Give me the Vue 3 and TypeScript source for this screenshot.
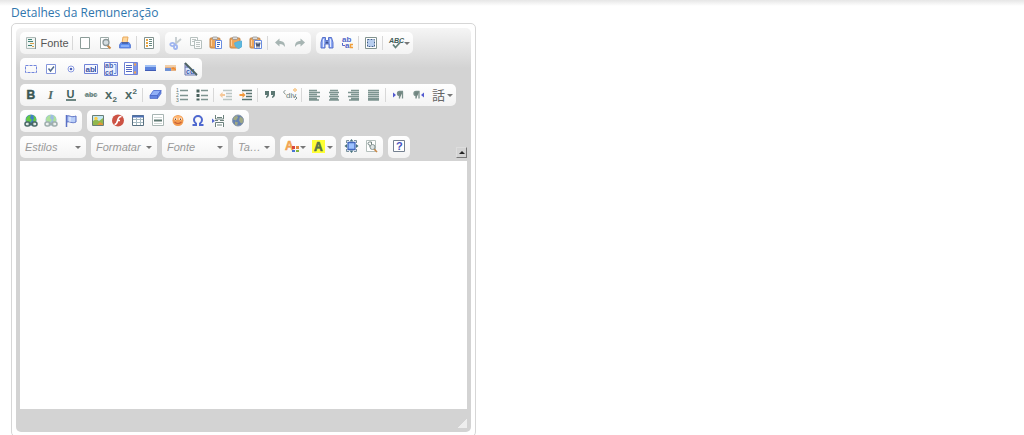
<script setup lang="ts">
import { ref } from 'vue'

interface Tool {
  icon: string
  label: string
  text?: string
  menu?: boolean
  dim?: boolean
}
type Item = Tool | null

const content = ref('')

const t = (icon: string, label: string, extra: Partial<Tool> = {}): Tool => ({ icon, label, ...extra })

const rows: Item[][][] = [
  [
    [t('source', 'Código-Fonte', { text: 'Fonte' }), null, t('page', 'Novo'), t('preview', 'Visualizar'), t('print', 'Imprimir'), null, t('templates', 'Modelos')],
    [t('cut', 'Recortar', { dim: true }), t('copy', 'Copiar', { dim: true }), t('paste', 'Colar'), t('pasteText', 'Colar como texto'), t('pasteWord', 'Colar do Word'), null, t('undo', 'Desfazer', { dim: true }), t('redo', 'Refazer', { dim: true })],
    [t('find', 'Localizar'), t('replace', 'Substituir'), null, t('selectAll', 'Selecionar tudo'), null, t('spell', 'Correção ortográfica', { menu: true })],
  ],
  [
    [t('form', 'Formulário'), t('checkbox', 'Caixa de seleção'), t('radio', 'Botão de opção'), t('field', 'Caixa de texto'), t('area', 'Área de texto'), t('list', 'Lista'), t('button', 'Botão'), t('imageButton', 'Botão de imagem'), t('hidden', 'Campo oculto')],
  ],
  [
    [t('bold', 'Negrito'), t('italic', 'Itálico'), t('underline', 'Sublinhado'), t('strike', 'Tachado'), t('sub', 'Subscrito'), t('sup', 'Sobrescrito'), null, t('eraser', 'Remover formatação')],
    [t('numbered', 'Lista numerada'), t('bulleted', 'Lista sem números'), null, t('outdent', 'Diminuir recuo', { dim: true }), t('indent', 'Aumentar recuo'), null, t('quote', 'Citação'), t('div', 'Contêiner DIV'), null, t('left', 'Alinhar à esquerda'), t('center', 'Centralizar'), t('right', 'Alinhar à direita'), t('justify', 'Justificado'), null, t('ltr', 'Esquerda para direita'), t('rtl', 'Direita para esquerda'), t('language', 'Idioma', { menu: true })],
  ],
  [
    [t('link', 'Link'), t('unlink', 'Remover link', { dim: true }), t('anchor', 'Âncora')],
    [t('image', 'Imagem'), t('flash', 'Flash'), t('table', 'Tabela'), t('rule', 'Linha horizontal'), t('smiley', 'Emoticon'), t('omega', 'Caractere especial'), t('pageBreak', 'Quebra de página'), t('iframe', 'IFrame')],
  ],
]

const combos = [
  { label: 'Estilos', name: 'Estilos', small: false },
  { label: 'Formatar', name: 'Formatar', small: false },
  { label: 'Fonte', name: 'Fonte', small: false },
  { label: 'Ta…', name: 'Tamanho', small: true },
]

const lastGroups: Tool[][] = [
  [t('textColor', 'Cor do texto', { menu: true }), t('bgColor', 'Cor do plano de fundo', { menu: true })],
  [t('maximize', 'Maximizar'), t('blocks', 'Mostrar blocos')],
  [t('about', 'Sobre')],
]

const sans = 'font-family="Liberation Sans, Arial, sans-serif"'
const board = '<rect x="2" y="3" width="10" height="10" rx="1" fill="#eda55a" stroke="#c08448"/><rect x="4.500" y="2" width="5" height="2.500" rx="1" fill="#ddd" stroke="#888" stroke-width=".7"/>'
const clasp = '<path d="M3.500 5v6" stroke="#ffd09a"/>'
const globe = '<circle cx="8" cy="7" r="5.500" fill="#4180c8"/><path d="M3 6c1-3 3-4 5-4L7 5l2 2-3 4C4 10 3 8 3 6zm7-4c2 1 4 3 3 6l-2 2-1-3 1-2z" fill="#65c944"/>'
const chain = '<rect x="2" y="9" width="5" height="4" rx="2" fill="#dfe8e6" stroke="#496765" stroke-width="1.500"/><rect x="9" y="9" width="5" height="4" rx="2" fill="#dfe8e6" stroke="#496765" stroke-width="1.500"/><path d="M5.500 11h5" stroke="#496765" stroke-width="1.500"/>'
const lines = (d: string) => `<path d="${d}" fill="none" stroke="#7d9490" stroke-width="1.300"/>`

const icons: Record<string, string> = {
  source: '<path d="M3.500 2.500h9v11h-9z" fill="#eef4f2" stroke="#b0bbb8"/><path d="M5 4.500h4M5 6.500h5M5 10.500h4" stroke="#3f7f74"/><path d="M7 8.500h4M9 11.500h2" stroke="#dba348"/><path d="M12.500 3v11" stroke="#7f908c"/>',
  page: '<path d="M3.500 2.500h9v11h-9z" fill="#fff" stroke="#8c9c98"/>',
  preview: '<path d="M3.500 2.500h8v11h-8z" fill="#fff" stroke="#9dabA8"/><path d="m10 10 3.500 3.500" stroke="#c98745" stroke-width="2"/><circle cx="9" cy="7.500" r="3" fill="#d5dde0" stroke="#8b9899" stroke-width="1.300"/>',
  print: '<path d="m5 8 1-6h5l-1 6z" fill="#ffd79c" stroke="#e9aa5e"/><path d="m4 7.500-1.500 2.500v3h11v-3L12 7.500z" fill="#5b8df0" stroke="#5576d0" stroke-width=".8"/><path d="M5 8h6" stroke="#38477b"/><path d="M4 11h8" stroke="#b4cfff"/>',
  templates: '<path d="M3.500 2.500h9v11h-9z" fill="#fff" stroke="#82938f"/><path d="M6 4v8" stroke="#e9a53f" stroke-width="2" stroke-dasharray="2 1"/><path d="M8 4.500h3M8 6.500h3M8 8.500h3M8 10.500h3" stroke="#66877e"/>',
  cut: '<path d="m8 2 0 7m5-5L6 10" stroke="#8e9da4" stroke-width="1.800"/><ellipse cx="4.500" cy="9.500" rx="2.200" ry="1.600" fill="none" stroke="#4a74e8" stroke-width="1.800"/><ellipse cx="7.500" cy="12" rx="1.600" ry="2" fill="none" stroke="#4a74e8" stroke-width="1.800"/>',
  copy: '<path d="M2.500 2.500h7v8h-7z" fill="#fff" stroke="#748884"/><path d="M6.500 5.500h7v8h-7z" fill="#fff" stroke="#748884"/><path d="M4 4.500h4M4 6.500h2M8 7.500h4M8 9.500h4M8 11.500h4" stroke="#82938f"/>',
  paste: board + clasp + '<path d="M7.500 5.500h6v8h-6z" fill="#fff" stroke="#6a8ce0"/><path d="M9 7.500h3M9 9.500h3M9 11.500h2" stroke="#4169c3"/>',
  pasteText: board + clasp + '<path d="m6.500 8 4-1.500 3-.5 0 6-3 1.500-3-2z" fill="#5bb9dd" stroke="#5cb0d8"/>',
  pasteWord: board + clasp + '<path d="M6.500 5.500h7v8h-7z" fill="#fff" stroke="#6a8ce0"/><path d="m8 7.500 1 4 1-3 1 3 1-4" fill="none" stroke="#4d5874" stroke-width="1.200"/>',
  undo: '<path d="M3 7.500 7.500 3.500v2.500c4 0 5.500 2 5.500 6-1.500-2-2.500-3-5.500-3v2.500z" fill="#53706b"/>',
  redo: '<path d="M13 7.500 8.500 3.500v2.500C4.500 6 3 8 3 12c1.500-2 2.500-3 5.500-3v2.500z" fill="#53706b"/>',
  find: '<path d="M3.500 2.500h3v3h3v-3h3l1.500 5v5.500h-4V9H6v4H2V7.500z" fill="#8fabf5" stroke="#4c67c5" stroke-width=".9"/><path d="M4.500 4v8M11.500 4v8" stroke="#e4ebff"/><path d="M6.500 7.500h3" stroke="#3c508f" stroke-width="2"/>',
  replace: `<text x="3" y="7" ${sans} font-size="8" font-weight="bold" fill="#5267c9">ab</text><text x="6" y="13" ${sans} font-size="8" font-weight="bold" fill="#5267c9">a</text><path d="M14 9.500h-2.500v3H14" fill="none" stroke="#f0a03c" stroke-width="1.500"/><path d="M3.500 8v2.500H6" fill="none" stroke="#5267c9"/>`,
  selectAll: '<path d="M2.500 2.500h11v11h-11z" fill="#fff" stroke="#82938f"/><path d="M5 5h6v6H5z" fill="#b8ceef"/><path d="M4.500 4.500h7v7h-7z" fill="none" stroke="#3f608f" stroke-dasharray="2 1"/>',
  spell: `<text x="1" y="8" ${sans} font-size="7" font-weight="bold" font-style="italic" fill="#3f5b56">ABC</text><path d="m5 9.500 2.500 3L12 7.500" fill="none" stroke="#64817b" stroke-width="1.800"/>`,
  form: '<path d="M2.500 4.500h11v7h-11z" fill="none" stroke="#7185dc" stroke-dasharray="3 1"/>',
  checkbox: '<path d="M3.500 3.500h9v9h-9z" fill="#fff" stroke="#8596dc"/><path d="m5.500 7.500 2 2.500L11 5.500" fill="none" stroke="#536d8e" stroke-width="1.500"/>',
  radio: '<circle cx="8" cy="8" r="3" fill="#fff" stroke="#8b9be2"/><circle cx="8" cy="8" r="1.300" fill="#4d62b5"/>',
  field: `<path d="M1.500 3.500h13v9h-13z" fill="#f4f7ff" stroke="#7184d8"/><text x="2.500" y="11" ${sans} font-size="8" font-weight="bold" fill="#3f539f">ab</text><path d="M12.500 5v6" stroke="#4b5fac"/>`,
  area: `<path d="M1.500 1.500h13v13h-13z" fill="#edf2ff" stroke="#7184d8"/><text x="2" y="7" ${sans} font-size="7" font-weight="bold" fill="#4b5fac">ab</text><text x="2" y="14" ${sans} font-size="7" font-weight="bold" fill="#4b5fac">cd</text><path d="M11 3.500h2v9h-2" fill="none" stroke="#678cda"/>`,
  list: '<path d="M1.500 1.500h13v12h-13z" fill="#fff" stroke="#7184d8"/><path d="M3 4.500h6M3 6.500h6M3 8.500h6M3 10.500h6" stroke="#5268c0"/><path d="M12 2v11" stroke="#7f95e5" stroke-width="4"/><path d="M11 3.500h2M11 11.500h2" stroke="#f5a44c" stroke-width="2"/>',
  button: '<path d="M2 4h11v6H2z" fill="#5a82dc"/><path d="M2 4h11v2H2z" fill="#a1c1f4"/><path d="M2 9.500h11" stroke="#405bb5"/>',
  imageButton: '<path d="M2 4h11v6H2z" fill="#e5b184"/><path d="M2 4h11v2H2z" fill="#f1cfaa"/><path d="M2 7h6v3H2z" fill="#6f92d5"/><path d="m8 8 2-2 3 2v1z" fill="#f18b2d"/>',
  hidden: `<path d="M2 2v12h12z" fill="#dce7ff" stroke="#6a79ad"/><text x="3" y="13" ${sans} font-size="7" font-weight="bold" fill="#405bab">cd</text><text x="2" y="7" ${sans} font-size="6" fill="#405bab">a</text><path d="m2 2 12 12" stroke="#4d6261" stroke-width="1.800"/>`,
  bold: `<text x="3.500" y="12" ${sans} font-size="12" font-weight="bold" fill="#3b5854" stroke="#3b5854" stroke-width=".5">B</text>`,
  italic: '<text x="5" y="12" font-family="Liberation Serif, serif" font-size="13" font-style="italic" font-weight="bold" fill="#526d69">I</text>',
  underline: `<text x="3.500" y="11" ${sans} font-size="11" font-weight="bold" fill="#3f605b">U</text><path d="M3 13h10" stroke="#3f605b" stroke-width="1.500"/>`,
  strike: `<text x="2" y="10" ${sans} font-size="7" font-weight="bold" fill="#627d79">abc</text><path d="M1.500 8h13" stroke="#627d79" stroke-width=".8"/>`,
  sub: `<text x="2" y="12" ${sans} font-size="13" font-weight="bold" fill="#4d6965">x<tspan x="9.500" y="15" font-size="8">2</tspan></text>`,
  sup: `<text x="2" y="12" ${sans} font-size="13" font-weight="bold" fill="#4d6965">x<tspan x="9.500" y="7" font-size="8">2</tspan></text>`,
  eraser: '<path d="m3 8.500 3.500-5H14l-3.500 5z" fill="#91b0f7" stroke="#5d79d6"/><path d="M3 8.500h7.500v3H3zM10.500 8.500 14 3.500v3l-3.500 5z" fill="#6284e2" stroke="#4b67c5" stroke-width=".7"/>',
  numbered: `<text x="2" y="5" ${sans} font-size="5" fill="#5d7873">1</text><text x="2" y="10" ${sans} font-size="5" fill="#5d7873">2</text><text x="2" y="15" ${sans} font-size="5" fill="#5d7873">3</text>` + lines('M6 3.500h8M6 8.500h8M6 12.500h8'),
  bulleted: '<path d="M2.500 2.500h3v3h-3zM2.500 7h3v3h-3zM2.500 11.500h3v2h-3z" fill="#48615c"/>' + lines('M7 3.500h7M7 8.500h7M7 12.500h7'),
  outdent: lines('M5 3.500h9M8 6.500h6M8 9.500h6M5 12.500h9') + '<path d="m1.500 8 3-3v2H7v2H4.500v2z" fill="#f3983b"/>',
  indent: '<path d="M4 3.500h10M8 6.500h6M8 9.500h6M4 12.500h10" stroke="#5b7571" stroke-width="1.300"/><path d="m7.500 8-3-3v2H1.500v2h3v2z" fill="#f3983b"/>',
  quote: '<path d="M3 4h4v3.500c0 2-1 3-3 3.500V9.500c1-.5 1-1 1-1.500H3zM9 4h4v3.500c0 2-1 3-3 3.500V9.500c1-.5 1-1 1-1.500H9z" fill="#5c7873"/>',
  div: `<text x="4" y="11" ${sans} font-size="8" fill="#637d78">div</text><path d="m3.500 3-2 2 2 2.500M13 9l2 2-2 2" fill="none" stroke="#85938f"/><path d="m11.500 3 1.500-1.500L14.500 3 13 4.500z" fill="none" stroke="#f3a43c"/>`,
  left: lines('M3 3.500h8M3 5.500h11M3 7.500h8M3 9.500h11M3 11.500h8M3 13h10'),
  center: lines('M4 3.500h8M3 5.500h10M4 7.500h8M3 9.500h10M4 11.500h8M3 13h10'),
  right: lines('M5 3.500h8M2 5.500h11M5 7.500h8M2 9.500h11M5 11.500h8M3 13h10'),
  justify: lines('M2 3.500h11M2 5.500h11M2 7.500h11M2 9.500h11M2 11.500h11M2 13h11'),
  ltr: '<path d="m3 5.500 3 2.500-3 2.500z" fill="#535bd0"/><path d="M13 4.500H9.500a2 2 0 0 0 0 4v3M12.500 4.500v7" fill="#70847f" stroke="#7a908b" stroke-width="1.300"/>',
  rtl: '<path d="m14 5.500-3 2.500 3 2.500z" fill="#535bd0"/><path d="M9.500 4.500H6a2 2 0 0 0 0 4v3M9 4.500v7" fill="#70847f" stroke="#7a908b" stroke-width="1.300"/>',
  language: '<text x="1" y="13" font-family="Noto Sans CJK JP, sans-serif" font-size="13" fill="#666">話</text>',
  link: globe + chain,
  unlink: globe + chain,
  anchor: '<path d="M3.500 2v12" stroke="#5b71c5" stroke-width="1.500"/><path d="M4 3c3-1 4 2 9 0v6c-4 2-6-1-9 0z" fill="#b9cef8" stroke="#5b71c5"/><path d="M7 4v5" stroke="#eef4ff"/>',
  image: '<path d="M2.500 2.500h11v10h-11z" fill="#c2e8f4" stroke="#687e76"/><path d="m3 8 3-2 3 2 4-3v7H3z" fill="#91b84d"/><circle cx="6" cy="5.500" r="1.700" fill="#ffcd45"/><path d="m7 12 3-3 3 2v1z" fill="#e19639"/>',
  flash: '<circle cx="8" cy="7.500" r="6" fill="#cc5244"/><path d="M11.500 3.500C8 3.500 8 6.500 7.500 8 7 10 6.500 11.500 4.500 11.500M7 7.500h3" fill="none" stroke="#fff" stroke-width="1.600"/>',
  table: '<path d="M2.500 2.500h11v10h-11z" fill="#fff" stroke="#587081"/><path d="M2 3.500h12" stroke="#4d70b2" stroke-width="2"/><path d="M3 6.500h10M3 9.500h10M6.500 5v7M10.500 5v7" stroke="#a5b9c1"/>',
  rule: '<path d="M2.500 1.500h11v11h-11z" fill="#fff" stroke="#a8b5b3"/><path d="M4 4.500h8M4 10.500h8" stroke="#d1d9d7"/><path d="M4 7.500h8" stroke="#5e7972" stroke-width="2"/>',
  smiley: '<circle cx="8" cy="7.500" r="5.500" fill="#f29b4f"/><ellipse cx="8" cy="5" rx="4" ry="2" fill="#ffb875"/><circle cx="5.500" cy="6" r="1.200" fill="#fff"/><circle cx="10.500" cy="6" r="1.200" fill="#fff"/><path d="M5.500 5.500v1.500M10.500 5.500v1.500" stroke="#734b33"/><path d="M4.500 9q3.500 3 7 0" fill="none" stroke="#c9623a" stroke-width="1.200"/>',
  omega: '<path d="M2.500 12h3.500v-1.500C4.500 9.500 4 8.500 4 7a4 4 0 0 1 8 0c0 1.500-.5 2.500-2 3.500V12h3.500" fill="none" stroke="#4e68cf" stroke-width="2"/>',
  pageBreak: '<path d="M5.500 2v4h8V2M5.500 14V9.500h8V14" fill="#fff" stroke="#6b817c"/><path d="M7 4.500h5M5 7.500h3M10 7.500h4M7 12h5" stroke="#6b817c"/><path d="m2 5.500 3 2.500-3 2z" fill="#586bd0"/>',
  iframe: '<circle cx="8" cy="7.500" r="5.500" fill="#6481b3"/><path d="M4 4 7 2.500l1 2-2 3-3-1zM10 3.500l3 2v4l-2 1-2-3zM5 8.500l3 1-1 3-2-1z" fill="#a0a983"/><circle cx="8" cy="7.500" r="5.500" fill="none" stroke="#8c9aaa"/>',
  textColor: `<text x="1" y="11" ${sans} font-size="12" font-weight="bold" fill="#f2a34f" stroke="#f2a34f" stroke-width=".5">A</text><path d="M8 7h3v3H8z" fill="#d8443c"/><path d="M12 7h3v3h-3z" fill="#e5843c"/><path d="M8 11h3v2H8z" fill="#4975d5"/><path d="M12 11h3v2h-3z" fill="#85b63e"/>`,
  bgColor: `<path d="M1 1h13v13H1z" fill="#ffff35"/><text x="3" y="12" ${sans} font-size="12" font-weight="bold" fill="#56724b" stroke="#56724b" stroke-width=".6">A</text>`,
  maximize: '<path d="m7.500 0 2 2.500h-4zM7.500 14l2-2.500h-4zM.5 7 3 5v4zM14.500 7 12 5v4z" fill="#45707c"/><path d="M4 3.500h7v7H4z" fill="#9cc2ff" stroke="#4267bd" stroke-width="1.300"/><path d="M2.500 4V1.500H5M10 1.500h2.500V4M2.500 10v2.500H5M10 12.500h2.500V10" fill="none" stroke="#78909c"/>',
  blocks: '<path d="M2.500 1.500h9v11h-9z" fill="#fff" stroke="#b3bebb"/><path d="M7.500 3H5.500a1.500 1.500 0 0 0 0 3h.500v2M7.500 3v5" fill="none" stroke="#71837f"/><path d="m9 9 4 4" stroke="#c98745" stroke-width="1.600"/><circle cx="8.500" cy="8" r="2.500" fill="#dce3e4" stroke="#899795"/>',
  about: `<path d="M2.500 1.500h11v11h-11z" fill="#fff" stroke="#748090"/><text x="5" y="11" ${sans} font-size="11" font-weight="bold" fill="#4651bd">?</text>`,
}
</script>

<template>
  <main class="page">
    <label class="title" for="details">Detalhes da Remuneração</label>
    <section class="frame">
      <div class="editor">
        <div class="toolbar" role="toolbar" aria-label="Formatação">
          <div v-for="(row, r) in rows" :key="r" class="row">
            <div v-for="(group, g) in row" :key="g" class="group">
              <template v-for="(item, i) in group" :key="i">
                <button v-if="item" type="button" class="tool" :class="{ menu: item.menu, dim: item.dim, wide: item.text }" :aria-label="item.label">
                  <svg class="icon" viewBox="0 0 16 16" aria-hidden="true" v-html="icons[item.icon]"></svg>
                  <span v-if="item.text">{{ item.text }}</span>
                  <i v-if="item.menu" class="arrow"></i>
                </button>
                <span v-else class="separator"></span>
              </template>
            </div>
          </div>
          <div class="row">
            <div v-for="combo in combos" :key="combo.name" class="group combo" :class="{ small: combo.small }">
              <select :aria-label="combo.name"><option>{{ combo.label }}</option></select>
              <i class="arrow"></i>
            </div>
            <div v-for="(group, g) in lastGroups" :key="g" class="group">
              <button v-for="item in group" :key="item.icon" type="button" class="tool" :class="{ menu: item.menu }" :aria-label="item.label">
                <svg class="icon" viewBox="0 0 16 16" aria-hidden="true" v-html="icons[item.icon]"></svg>
                <i v-if="item.menu" class="arrow"></i>
              </button>
            </div>
            <button type="button" class="collapse" aria-label="Recolher barra de ferramentas"><i class="arrow up"></i></button>
          </div>
        </div>
        <textarea id="details" v-model="content" class="content"></textarea>
        <div class="footer"><span class="grip"></span></div>
      </div>
    </section>
  </main>
</template>

<style>
body {
  margin: 0;
  background: #fff;
  overflow: hidden;
}
</style>

<style scoped>
* {
  box-sizing: border-box;
}
.page {
  padding: 4px 11px 0;
  background: linear-gradient(#e6e6e6, #fff 6px);
  font-family: "Liberation Sans", Arial, sans-serif;
}
.title {
  display: block;
  height: 19px;
  color: #2f76ad;
  font: 12px/17px "Open Sans", sans-serif;
}
.frame {
  width: 100%;
  max-width: 465px;
  padding: 4px;
  border: 1px solid #d6d6d6;
  border-radius: 5px;
}
.editor {
  padding: 4px 4px 0;
  border-radius: 5px;
  background: linear-gradient(#f5f5f5, #d3d3d3 40px);
}
.toolbar {
  display: flex;
  flex-direction: column;
  gap: 4px;
  padding-bottom: 3px;
}
.row {
  display: flex;
  gap: 5px;
}
.group {
  display: flex;
  align-items: center;
  height: 22px;
  padding: 0 1px;
  border-radius: 5px;
  background: linear-gradient(#fff, #f3f3f3);
}
.tool {
  display: flex;
  align-items: center;
  justify-content: center;
  width: 20px;
  height: 20px;
  padding: 0;
  border: 0;
  background: none;
  color: #555;
  font: 11px/16px "Liberation Sans", Arial, sans-serif;
}
.tool.menu {
  width: 27px;
}
.tool.wide {
  width: 50px;
  gap: 1px;
}
.tool.dim .icon {
  opacity: 0.5;
}
.icon {
  flex: none;
  width: 16px;
  height: 16px;
  overflow: visible;
}
.arrow {
  flex: none;
  border: solid transparent;
  border-width: 3px 3px 0;
  border-top-color: #777;
}
.separator {
  width: 1px;
  height: 14px;
  margin: 0 2px 0 1px;
  background: #d8d8d8;
}
.combo {
  width: 66px;
  padding: 0 5px;
}
.combo.small {
  width: 42px;
}
.combo select {
  flex: 1;
  min-width: 0;
  height: 20px;
  padding: 0;
  border: 0;
  appearance: none;
  background: none;
  color: #999;
  font: italic 11px/20px "Liberation Sans", Arial, sans-serif;
}
.collapse {
  display: flex;
  align-items: center;
  justify-content: center;
  align-self: flex-end;
  width: 11px;
  height: 11px;
  margin-left: auto;
  padding: 0;
  border: 1px solid #ddd;
  border-right-color: #777;
  border-bottom-color: #777;
  background: #d3d3d3;
}
.arrow.up {
  border-width: 0 3px 3px;
  border-bottom-color: #222;
}
.content {
  display: block;
  width: 100%;
  height: 248px;
  padding: 8px;
  border: 0;
  outline: 0;
  resize: none;
  background: #fff;
}
.footer {
  display: flex;
  align-items: center;
  justify-content: flex-end;
  height: 23px;
}
.grip {
  width: 10px;
  height: 10px;
  margin-top: 4px;
  background: linear-gradient(135deg, transparent 50%, #eee 50%);
}
</style>
